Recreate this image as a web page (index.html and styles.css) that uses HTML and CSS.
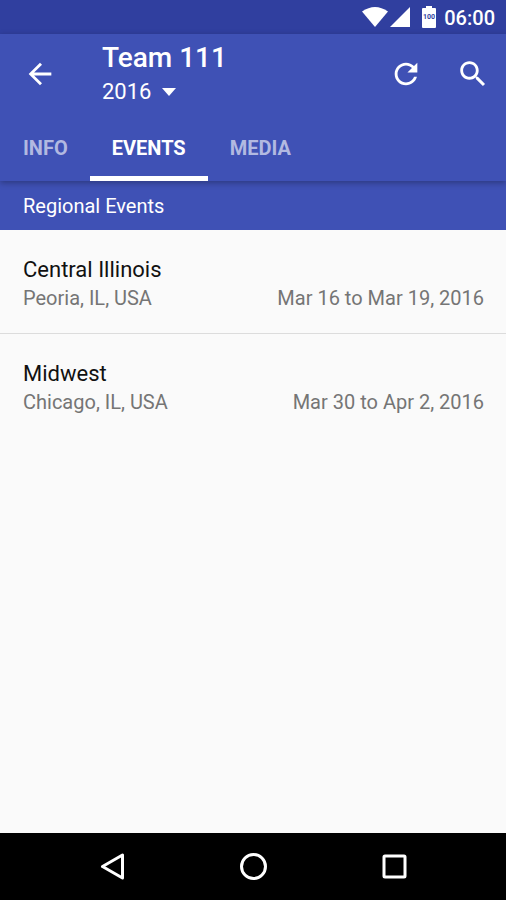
FILE: index.html
```
<!DOCTYPE html>
<html lang="en">
<head>
    <meta charset="UTF-8">
    <meta name="viewport" content="width=device-width, initial-scale=1.0">
    <title>Team 111</title>
    <link rel="stylesheet" href="styles.css">
</head>
<body>
    <div class="status-bar">
        <svg class="wifi" width="26" height="20" viewBox="0 0 26 20"><path d="M0 4.500Q13-4.500 26 4.500L13 20z"/></svg>
        <svg class="signal" width="20" height="20" viewBox="0 0 20 20"><path d="M20 0v20H0z"/></svg>
        <svg class="battery" width="14" height="22" viewBox="0 0 14 22">
            <path d="M4 0h6v2h3q1 0 1 1v18q0 1-1 1H1q-1 0-1-1V3q0-1 1-1h3z"/>
            <text x="7" y="13" text-anchor="middle">100</text>
        </svg>
        <span class="clock">06:00</span>
    </div>

    <header class="app-bar">
        <div class="toolbar">
            <button class="icon-btn" type="button" aria-label="Back">
                <svg class="icon" viewBox="0 0 24 24"><path d="M20 11H7.830l5.590-5.590L12 4l-8 8 8 8 1.410-1.410L7.830 13H20v-2z"/></svg>
            </button>
            <div class="titles">
                <h1 class="title">Team 111</h1>
                <div class="year">
                    <select class="year-select" aria-label="Year">
                        <option>2016</option>
                    </select>
                    <svg class="caret" width="14" height="8" viewBox="0 0 14 8"><path d="M0 0h14L7 8z"/></svg>
                </div>
            </div>
            <div class="actions">
                <button class="icon-btn" type="button" aria-label="Refresh">
                    <svg class="icon" viewBox="0 0 24 24"><path d="M17.650 6.350C16.200 4.900 14.210 4 12 4c-4.420 0-7.990 3.580-7.990 8s3.570 8 7.990 8c3.730 0 6.840-2.550 7.730-6h-2.080c-.82 2.330-3.040 4-5.650 4-3.310 0-6-2.690-6-6s2.690-6 6-6c1.660 0 3.140.69 4.220 1.780L13 11h7V4l-2.350 2.350z"/></svg>
                </button>
                <button class="icon-btn" type="button" aria-label="Search">
                    <svg class="icon" viewBox="0 0 24 24"><path d="M15.500 14h-.79l-.28-.27C15.410 12.590 16 11.110 16 9.500 16 5.910 13.090 3 9.500 3S3 5.910 3 9.500 5.910 16 9.500 16c1.610 0 3.090-.59 4.230-1.570l.27.28v.79l5 4.990L20.490 19l-4.990-5zm-6 0C7.010 14 5 11.990 5 9.500S7.010 5 9.500 5 14 7.010 14 9.500 11.990 14 9.500 14z"/></svg>
                </button>
            </div>
        </div>
        <nav class="tabs">
            <button class="tab" type="button">INFO</button>
            <button class="tab active" type="button">EVENTS</button>
            <button class="tab" type="button">MEDIA</button>
        </nav>
    </header>

    <main class="content">
        <h2 class="section">Regional Events</h2>
        <ul class="events">
            <li class="event">
                <h3 class="event-name">Central Illinois</h3>
                <div class="event-info">
                    <span>Peoria, IL, USA</span>
                    <span>Mar 16 to Mar 19, 2016</span>
                </div>
            </li>
            <li class="event">
                <h3 class="event-name">Midwest</h3>
                <div class="event-info">
                    <span>Chicago, IL, USA</span>
                    <span>Mar 30 to Apr 2, 2016</span>
                </div>
            </li>
        </ul>
    </main>

    <footer class="nav-bar">
        <button class="nav-btn" type="button" aria-label="Back">
            <svg class="nav-icon" viewBox="0 0 28 28"><path d="M25.500 2v23L5.500 13.500z"/></svg>
        </button>
        <button class="nav-btn" type="button" aria-label="Home">
            <svg class="nav-icon" viewBox="0 0 28 28"><circle cx="14.500" cy="13.500" r="12"/></svg>
        </button>
        <button class="nav-btn" type="button" aria-label="Recent apps">
            <svg class="nav-icon" viewBox="0 0 28 28"><rect x="3" y="3" width="21" height="21" rx="1"/></svg>
        </button>
    </footer>
</body>
</html>
```
FILE: styles.css
```
*{
    box-sizing: border-box;
}
body{
    margin: 0;
    min-height: 100vh;
    display: flex;
    flex-direction: column;
    background-color: #fafafa;
    font-family: Roboto, sans-serif;
    font-size: 20px;
}
h1, h2, h3, ul{
    margin: 0;
    padding: 0;
}
button{
    border: none;
    padding: 0;
    background: none;
    color: inherit;
    font-family: inherit;
}
svg{
    display: block;
}

/* status bar */
.status-bar{
    display: flex;
    align-items: center;
    justify-content: flex-end;
    height: 34px;
    padding-right: 11px;
    background-color: #303f9f;
    color: white;
    fill: white;
}
.signal{
    margin-left: 2px;
}
.battery{
    margin-left: 12px;
}
.battery text{
    fill: #303f9f;
    font-size: 7px;
    font-weight: bold;
}
.clock{
    margin-left: 8px;
    padding-top: 2px;
    font-weight: 500;
    line-height: 24px;
}

/* app bar */
.app-bar{
    position: relative;
    background-color: #3f51b5;
    color: white;
    box-shadow: 0 2px 6px rgba(0, 0, 0, 0.3);
}
.toolbar{
    display: flex;
    align-items: center;
    height: 79px;
    padding: 0 16px 0 23px;
}
.icon{
    width: 34px;
    height: 34px;
    fill: white;
}
.titles{
    flex: 1;
    margin-left: 45px;
    padding-top: 2px;
}
.title{
    font-size: 28px;
    font-weight: 500;
    line-height: 34px;
}
.year{
    display: flex;
    align-items: center;
    gap: 10px;
}
.year-select{
    appearance: none;
    border: none;
    padding: 0;
    background: none;
    color: white;
    font-family: inherit;
    font-size: 22px;
    line-height: 34px;
}
.caret{
    fill: white;
}
.actions{
    display: flex;
    gap: 33px;
}
.tabs{
    display: flex;
    padding-left: 1px;
}
.tab{
    height: 68px;
    padding: 2px 22px 0;
    border-top: 5px solid transparent;
    border-bottom: 5px solid transparent;
    color: #b2b9e1;
    font-size: 20px;
    font-weight: bold;
}
.tab.active{
    color: white;
    border-bottom-color: white;
}

/* event list */
.content{
    flex: 1;
}
.section{
    padding: 1px 23px 0;
    background-color: #3f51b5;
    color: white;
    font-size: 20px;
    font-weight: normal;
    line-height: 48px;
}
.events{
    list-style: none;
}
.event{
    padding: 25px 22px 22px 23px;
}
.event + .event{
    border-top: 1px solid #dcdcdc;
}
.event-name{
    color: #111;
    font-size: 22px;
    font-weight: normal;
    line-height: 30px;
}
.event-info{
    display: flex;
    justify-content: space-between;
    color: #757575;
    line-height: 26px;
}

/* navigation bar */
.nav-bar{
    display: flex;
    height: 67px;
    padding: 0 8%;
    background-color: black;
}
.nav-btn{
    flex: 1;
    display: flex;
    align-items: center;
    justify-content: center;
}
.nav-icon{
    width: 28px;
    height: 28px;
    fill: none;
    stroke: white;
    stroke-width: 3;
    stroke-linejoin: round;
}
```
